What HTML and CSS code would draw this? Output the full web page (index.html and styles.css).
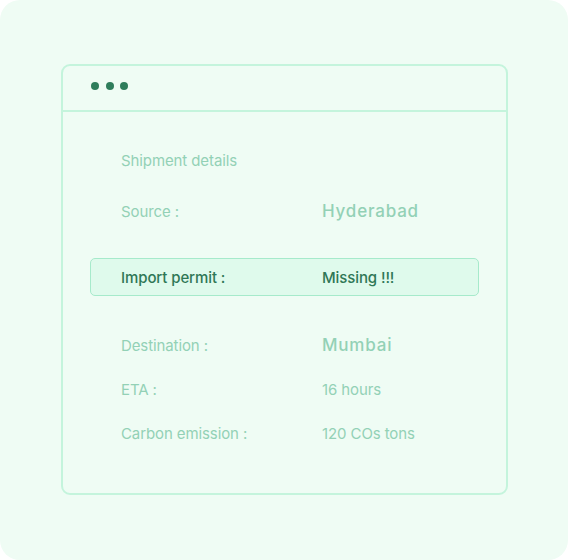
FILE: index.html
```html
<!DOCTYPE html>
<html lang="en">
<head>
<meta charset="utf-8">
<title>Shipment details</title>
<link rel="stylesheet" href="styles.css">
</head>
<body>
<div class="canvas">
  <div class="window">
    <div class="titlebar">
      <span class="dot"></span><span class="dot"></span><span class="dot"></span>
    </div>
    <div class="content">
      <div class="row title-row"><span class="label">Shipment details</span></div>
      <div class="row source-row"><span class="label">Source :</span><span class="value big">Hyderabad</span></div>
      <div class="row alert-row"><span class="label">Import permit :</span><span class="value">Missing !!!</span></div>
      <div class="group">
        <div class="row tall"><span class="label">Destination :</span><span class="value big">Mumbai</span></div>
        <div class="row tall"><span class="label">ETA :</span><span class="value">16 hours</span></div>
        <div class="row tall"><span class="label">Carbon emission :</span><span class="value">120 COs tons</span></div>
      </div>
    </div>
  </div>
</div>
</body>
</html>
```
FILE: styles.css
```css
html, body {
  margin: 0;
  padding: 0;
  background: #ffffff;
}
body {
  font-family: Inter, "Noto Sans", sans-serif;
}
.canvas {
  width: 568px;
  height: 560px;
  box-sizing: border-box;
  background: #effcf4;
  border-radius: 20px;
  padding: 64px 0 0 61px;
}
.window {
  width: 447px;
  height: 431px;
  box-sizing: border-box;
  border: 2px solid #c4f4dc;
  border-radius: 9px;
}
.titlebar {
  height: 46px;
  box-sizing: border-box;
  border-bottom: 2px solid #c4f4dc;
  display: flex;
  align-items: center;
  gap: 6.5px;
  padding: 0 0 4px 28px;
}
.dot {
  width: 8px;
  height: 8px;
  border-radius: 50%;
  background: #2f7d5b;
}
.content {
  display: flex;
  flex-direction: column;
  padding: 29px 27px 0 27px;
}
.row {
  height: 38px;
  box-sizing: border-box;
  border: 1px solid transparent;
  border-radius: 5px;
  padding: 0 0 0 30px;
  display: grid;
  grid-template-columns: 201px 1fr;
  align-items: center;
  font-size: 15px;
  letter-spacing: -0.1px;
  color: #93d1b6;
}
.source-row { margin-top: 13px; }
.alert-row {
  margin-top: 28px;
  background: #dffaec;
  border-color: #a6eacb;
  color: #2f7756;
  font-weight: 450;
}
.group {
  margin-top: 27px;
  display: flex;
  flex-direction: column;
}
.row.tall { height: 44px; }
.big {
  font-size: 17px;
  letter-spacing: 0.8px;
  font-weight: 450;
}
```
